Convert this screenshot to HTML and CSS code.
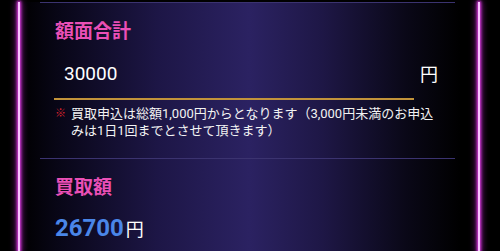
FILE: index.html
```html
<!DOCTYPE html>
<html lang="ja">
<head>
    <meta charset="UTF-8">
    <meta name="viewport" content="width=device-width, initial-scale=1.0">
    <title>買取額</title>
    <link rel="stylesheet" href="styles.css">
</head>
<body>
    <div class="panel">
        <div class="section section-face">
            <h2 class="label">額面合計</h2>
            <div class="input-row">
                <div class="input-box">30000</div>
                <span class="unit">円</span>
            </div>
            <p class="note"><span class="mark">※</span><span>買取申込は総額1,000円からとなります（3,000円未満のお申込みは1日1回までとさせて頂きます）</span></p>
        </div>

        <div class="section section-price">
            <h2 class="label">買取額</h2>
            <p class="price"><span class="price-num">26700</span><span class="price-unit">円</span></p>
        </div>
    </div>
</body>
</html>
```

FILE: styles.css
```css
html, body {
    margin: 0;
    padding: 0;
}
body {
    width: 500px;
    height: 251px;
    overflow: hidden;
    background-color: #000;
    font-family: "Noto Sans CJK JP", "Noto Sans", sans-serif;
    color: #fff;
}
.panel {
    position: relative;
    margin-left: 20px;
    width: 458px;
    height: 251px;
    background: linear-gradient(90deg, #000 0%, #080616 8%, #1d1646 30%, #2b2262 50%, #1e1746 66%, #0a0818 84%, #000 96%);
}
.panel::before,
.panel::after {
    content: "";
    position: absolute;
    top: 0;
    bottom: 0;
    width: 2px;
    background-color: #f8c4ff;
    box-shadow: 0 0 3px 1px #e23ee6, 0 0 7px 1px #a020b0;
}
.panel::before {
    left: -2px;
}
.panel::after {
    right: -2px;
}
.section {
    margin: 0 23px 0 20px;
    padding-left: 15px;
    border-top: 1px solid #3b3370;
}
.section-face {
    margin-top: 2px;
    padding-top: 14px;
    padding-bottom: 19px;
}
.label {
    margin: 0;
    font-size: 19px;
    line-height: 26px;
    font-weight: bold;
    color: #ea4fb6;
}
.input-row {
    display: flex;
    align-items: flex-end;
    margin-top: 18px;
    margin-left: -1px;
}
.input-box {
    width: 350px;
    padding: 0 0 11px 10px;
    border-bottom: 2px solid #c2933a;
    font-family: Roboto, "Noto Sans CJK JP", sans-serif;
    font-size: 19px;
    line-height: 26px;
}
.unit {
    margin-left: 6px;
    padding-bottom: 15px;
    font-size: 18px;
    line-height: 24px;
}
.note {
    display: flex;
    margin: 5px 0 0;
    padding-right: 16px;
    font-family: Roboto, "Noto Sans CJK JP", sans-serif;
    font-size: 13px;
    line-height: 17px;
    color: #f2f2f2;
}
.mark {
    flex-shrink: 0;
    width: 16px;
    font-size: 11px;
    font-weight: bold;
    color: #d8222e;
}
.section-price {
    padding-top: 14px;
}
.price {
    margin: 14px 0 0;
    line-height: 30px;
}
.price-num {
    font-family: Roboto, "Noto Sans", sans-serif;
    font-size: 24px;
    font-weight: bold;
    color: #4a86e8;
}
.price-unit {
    margin-left: 2px;
    font-size: 18px;
}
```
